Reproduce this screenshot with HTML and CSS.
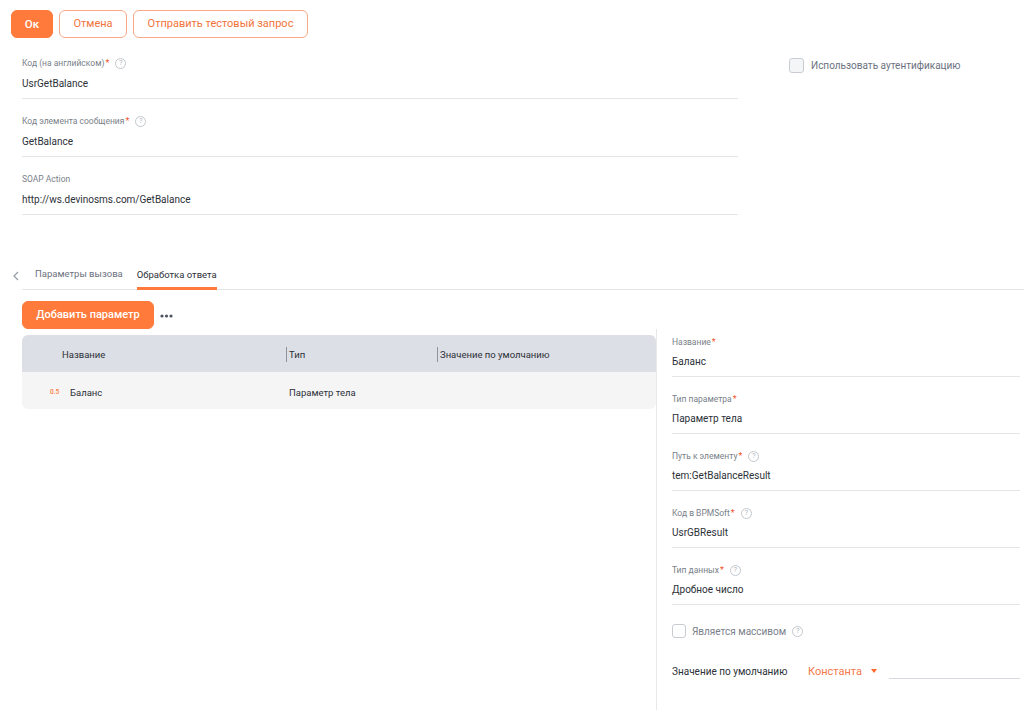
FILE: index.html
```html
<!DOCTYPE html>
<html lang="ru">
<head>
<meta charset="utf-8">
<link rel="stylesheet" href="styles.css">
</head>
<body>
<div class="toolbar">
  <button class="btn btn-primary btn-ok">Ок</button>
  <button class="btn btn-outline btn-cancel">Отмена</button>
  <button class="btn btn-outline btn-test">Отправить тестовый запрос</button>
</div>

<div class="top-form">
  <div class="fields">
    <div class="field">
      <div class="label">Код (на английском)<span class="req">*</span><span class="help">?</span></div>
      <div class="value">UsrGetBalance</div>
    </div>
    <div class="field">
      <div class="label">Код элемента сообщения<span class="req">*</span><span class="help">?</span></div>
      <div class="value">GetBalance</div>
    </div>
    <div class="field">
      <div class="label">SOAP Action</div>
      <div class="value">http://ws.devinosms.com/GetBalance</div>
    </div>
  </div>
  <div class="side">
    <label class="check"><span class="box"></span><span class="check-text">Использовать аутентификацию</span></label>
  </div>
</div>

<div class="tabs">
  <span class="chev"><svg width="8" height="10" viewBox="0 0 8 10"><path d="M6 1 L2 5 L6 9" fill="none" stroke="#9aa0a8" stroke-width="1.3"/></svg></span>
  <div class="tab-list">
    <div class="tab">Параметры вызова</div>
    <div class="tab active">Обработка ответа</div>
  </div>
</div>

<div class="content">
  <div class="left">
    <div class="actions">
      <button class="btn btn-primary btn-add">Добавить параметр</button>
      <span class="dots"><svg width="13" height="4" viewBox="0 0 13 4"><circle cx="2" cy="2" r="1.6" fill="#4d5360"/><circle cx="6.5" cy="2" r="1.6" fill="#4d5360"/><circle cx="11" cy="2" r="1.6" fill="#4d5360"/></svg></span>
    </div>
    <div class="table">
      <div class="thead">
        <div class="c c1">Название</div>
        <div class="c c2 sep">Тип</div>
        <div class="c c3 sep">Значение по умолчанию</div>
      </div>
      <div class="trow">
        <div class="c c1"><span class="ico">0.5</span>Баланс</div>
        <div class="c c2">Параметр тела</div>
        <div class="c c3"></div>
      </div>
    </div>
  </div>
  <div class="right">
    <div class="field rf">
      <div class="label">Название<span class="req">*</span></div>
      <div class="value">Баланс</div>
    </div>
    <div class="field rf">
      <div class="label">Тип параметра<span class="req">*</span></div>
      <div class="value">Параметр тела</div>
    </div>
    <div class="field rf">
      <div class="label">Путь к элементу<span class="req">*</span><span class="help">?</span></div>
      <div class="value">tem:GetBalanceResult</div>
    </div>
    <div class="field rf">
      <div class="label">Код в BPMSoft<span class="req">*</span><span class="help">?</span></div>
      <div class="value">UsrGBResult</div>
    </div>
    <div class="field rf">
      <div class="label">Тип данных<span class="req">*</span><span class="help">?</span></div>
      <div class="value">Дробное число</div>
    </div>
    <label class="check rcheck"><span class="box"></span><span class="check-text">Является массивом</span><span class="help">?</span></label>
    <div class="default-row">
      <span class="dlabel">Значение по умолчанию</span>
      <span class="const">Константа</span>
      <span class="caret"></span>
      <span class="dinput"></span>
    </div>
  </div>
</div>
</body>
</html>
```
FILE: styles.css
```css
* { box-sizing: border-box; }
html, body { margin: 0; padding: 0; background: #fff; }
body {
  font-family: Roboto, "Liberation Sans", sans-serif;
  color: #2c3038;
  width: 1024px;
  height: 718px;
  overflow: hidden;
}

.btn {
  font-family: inherit;
  height: 28px;
  border-radius: 6px;
  font-size: 11px;
  padding: 0;
  cursor: pointer;
  line-height: 26px;
}
.btn-primary {
  background: #ff7a3b;
  border: 1px solid #ff7a3b;
  color: #fff;
  font-weight: 500;
}
.btn-outline {
  background: #fff;
  border: 1px solid #f8a887;
  color: #f2733b;
}

.toolbar {
  display: flex;
  gap: 6px;
  padding: 10px 11px 0;
}
.btn-ok { width: 42px; font-size: 11.5px; }
.btn-cancel { width: 68px; }
.btn-test { width: 175px; }

.top-form {
  display: flex;
  padding: 18px 0 0 22px;
}
.fields { width: 716px; }
.side { padding: 2px 0 0 51px; }

.field {
  padding-bottom: 4px;
  border-bottom: 1px solid #e3e5e9;
  margin-bottom: 15px;
}
.label {
  font-size: 8.5px;
  line-height: 14px;
  height: 14px;
  color: #7a7f89;
  display: flex;
  align-items: center;
}
.req { color: #f0552f; margin-left: 1px; font-size: 9px; }
.help {
  display: inline-flex;
  align-items: center;
  justify-content: center;
  width: 11px;
  height: 11px;
  border: 1px solid #c3c7cd;
  border-radius: 50%;
  font-size: 7.5px;
  color: #b3b7be;
  margin-left: 6px;
  line-height: 1;
}
.value {
  font-size: 10px;
  line-height: 20px;
  margin-top: 4px;
  color: #2c3038;
}

.check {
  display: flex;
  align-items: center;
  gap: 7px;
}
.box {
  width: 15px;
  height: 15px;
  border: 1px solid #c9cdd3;
  border-radius: 3px;
  background: #f4f5f7;
  flex: none;
}
.check-text {
  font-size: 10px;
  color: #6b7180;
}

.tabs {
  display: flex;
  align-items: stretch;
  margin-top: 32px;
  height: 28px;
}
.chev {
  width: 22px;
  padding-left: 12px;
  display: flex;
  align-items: center;
}
.tab-list {
  flex: 1;
  display: flex;
  gap: 14px;
  border-bottom: 1px solid #e3e5e9;
  padding-left: 13px;
}
.tab {
  font-size: 9.5px;
  color: #6b7180;
  display: flex;
  align-items: center;
  padding-bottom: 4px;
}
.tab.active {
  color: #2c3038;
  border-bottom: 3px solid #ff7a3b;
  padding-bottom: 1px;
  margin-bottom: -1px;
}

.content {
  display: flex;
  height: 420px;
}
.left {
  width: 656px;
  padding: 11px 0 0 22px;
}
.actions {
  display: flex;
  align-items: center;
  gap: 6px;
  height: 28px;
}
.btn-add { width: 132px; }
.dots { display: flex; align-items: center; padding-top: 2px; }
.table {
  margin-top: 6px;
  border-radius: 6px;
  overflow: hidden;
  width: 634px;
}
.thead, .trow {
  display: flex;
  height: 37px;
  align-items: center;
  font-size: 9.5px;
}
.thead { background: #dcdfe5; color: #2c3038; padding-top: 1px; }
.trow { background: #f5f5f6; padding-top: 3px; }
.c { display: flex; align-items: center; height: 100%; }
.c1 { width: 264px; padding-left: 40px; }
.trow .c1 { padding-left: 28px; }
.c2 { width: 151px; padding-left: 3px; }
.c3 { flex: 1; padding-left: 3px; }
.sep { position: relative; }
.sep::before {
  content: "";
  position: absolute;
  left: 0;
  top: 11px;
  height: 15px;
  border-left: 1px solid #8f949c;
}
.ico {
  font-size: 6.5px;
  color: #ff7a3b;
  width: 20px;
  font-weight: 500;
}

.right {
  flex: 1;
  border-left: 1px solid #e6e8eb;
  margin-top: 39px;
  padding: 6px 4px 0 15px;
}
.rf { margin-bottom: 15px; }
.rf .value { margin-top: 3px; }
.rcheck {
  margin-top: 19px;
  gap: 6px;
}
.rcheck .box { width: 14px; height: 14px; background: #fff; }
.rcheck .check-text { font-size: 10px; color: #7a7f8a; }
.rcheck .help { margin-left: 0; }
.default-row {
  display: flex;
  align-items: center;
  margin-top: 25px;
  height: 16px;
}
.dlabel { font-size: 10px; color: #2c3038; width: 136px; }
.const { font-size: 11px; color: #f4784a; }
.caret {
  width: 0; height: 0;
  border-left: 3px solid transparent;
  border-right: 3px solid transparent;
  border-top: 4px solid #ff6a2b;
  margin-left: 9px;
}
.dinput {
  flex: 1;
  height: 16px;
  border-bottom: 1px solid #d6d9de;
  margin-left: 12px;
}
```
